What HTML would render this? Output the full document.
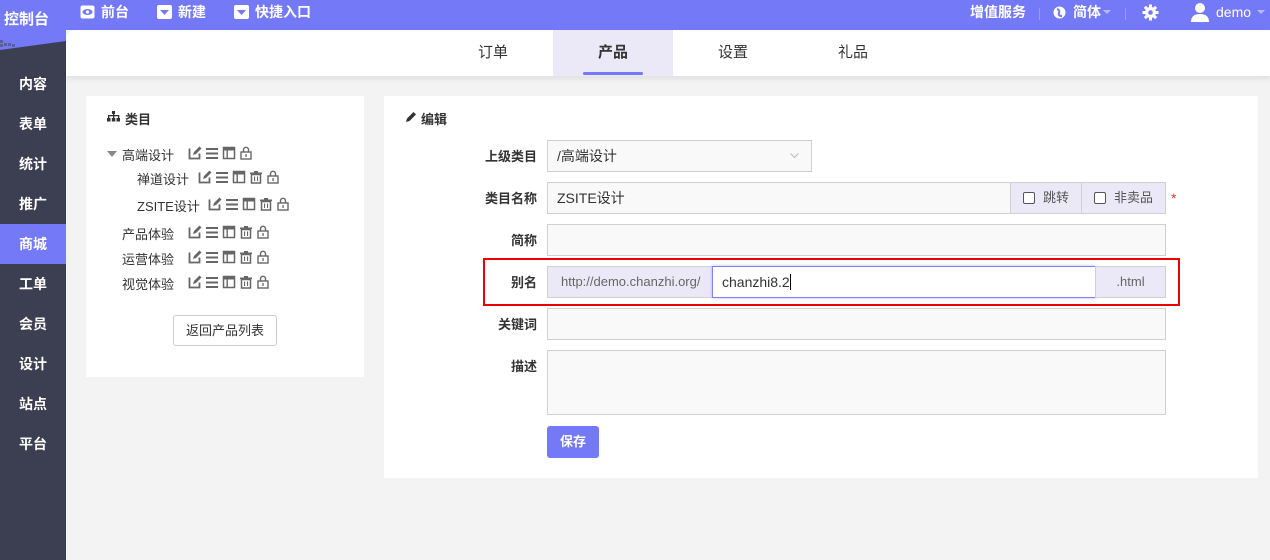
<!DOCTYPE html>
<html><head><meta charset="utf-8">
<style>
*{box-sizing:border-box;margin:0;padding:0}
body{width:1270px;height:560px;overflow:hidden;background:#f3f3f3;font-family:"Liberation Sans","Noto Sans CJK SC",sans-serif;font-size:13px;color:#333;position:relative}
.top{position:absolute;left:0;top:0;width:1270px;height:30px;background:#7479f8}
.top .t{position:absolute;top:0;line-height:24px;color:#fff;font-size:14px;font-weight:bold}
.side{position:absolute;left:0;top:30px;width:66px;height:530px;background:#3c3e51}
.side .slant{position:absolute;left:0;top:0;width:66px;height:20px;background:#7479f8;clip-path:polygon(0 0,100% 0,100% 55%,0 100%)}
.side a{position:absolute;left:0;width:66px;height:40px;line-height:40px;text-align:center;color:#fff;font-size:14px;font-weight:bold}
.side a.on{background:#7479f8}
.tabs{position:absolute;left:66px;top:30px;width:1204px;height:46px;background:#fff;border-top-left-radius:10px;box-shadow:0 3px 6px rgba(0,0,0,.08)}
.tab{position:absolute;top:0;width:120px;height:46px;line-height:46px;text-align:center;font-size:15px;color:#333}
.tab.on{background:#ebe9f7;font-weight:bold}
.tab.on:after{content:"";position:absolute;left:30px;bottom:1px;width:60px;height:3px;border-radius:2px;background:#7479f8}
.panel{position:absolute;background:#fff}
.tree div{position:absolute;font-size:13px;color:#333;white-space:nowrap}
.lbl{position:absolute;width:90px;text-align:right;font-weight:bold;font-size:13px;color:#333}
.inp{position:absolute;left:547px;width:619px;height:32px;background:#f9f9f9;border:1px solid #d0d0d0;font-size:14px;line-height:30px;padding-left:9px}
.addon{position:absolute;background:#ebe9f7;border:1px solid #d0d0d0;height:32px;line-height:30px;font-size:13px;color:#555}
.cb{display:inline-block;width:12px;height:12px;border:1px solid #555;border-radius:2px;vertical-align:-2px;margin-right:8px;background:#fff}
</style></head><body>
<div class="top">
  <div class="t" style="left:4px;top:5px;line-height:30px;font-size:15px">控制台</div>
  <svg style="position:absolute;left:80px;top:5px" width="15" height="14"><rect x="0.5" y="0.5" width="14" height="13" rx="2" fill="#fff"/><ellipse cx="7.5" cy="7" rx="5" ry="3" fill="#7479f8"/><circle cx="7.5" cy="7" r="1.6" fill="#fff"/></svg>
  <div class="t" style="left:101px">前台</div>
  <svg style="position:absolute;left:157px;top:5px" width="15" height="14"><rect width="15" height="14" rx="2" fill="#fff"/><path d="M3 5h9l-4.5 5z" fill="#7479f8"/></svg>
  <div class="t" style="left:178px">新建</div>
  <svg style="position:absolute;left:234px;top:5px" width="15" height="14"><rect width="15" height="14" rx="2" fill="#fff"/><path d="M3 5h9l-4.5 5z" fill="#7479f8"/></svg>
  <div class="t" style="left:255px">快捷入口</div>
  <div class="t" style="left:970px">增值服务</div>
  <div style="position:absolute;left:1039px;top:8px;width:1px;height:12px;background:#9a9df8"></div>
  <svg style="position:absolute;left:1053px;top:6px" width="13" height="13"><circle cx="6.5" cy="6.5" r="6" fill="#fff"/><path d="M4 3q3 1 2 4t3 3" stroke="#7479f8" stroke-width="2" fill="none"/></svg>
  <div class="t" style="left:1073px">简体</div>
  <svg style="position:absolute;left:1103px;top:10px" width="8" height="5"><path d="M0 0h8l-4 4z" fill="#b7b9fb"/></svg>
  <div style="position:absolute;left:1125px;top:8px;width:1px;height:12px;background:#9a9df8"></div>
  <svg style="position:absolute;left:1142px;top:4px" width="17" height="17" viewBox="0 0 17 17"><g fill="#fff"><circle cx="8.5" cy="8.5" r="5.5"/><rect x="7" y="0.5" width="3" height="16"/><rect x="0.5" y="7" width="16" height="3"/><rect x="7" y="0.5" width="3" height="16" transform="rotate(45 8.5 8.5)"/><rect x="7" y="0.5" width="3" height="16" transform="rotate(-45 8.5 8.5)"/></g><circle cx="8.5" cy="8.5" r="2.3" fill="#7479f8"/></svg>
  <svg style="position:absolute;left:1190px;top:2px" width="20" height="20"><circle cx="10" cy="6" r="5" fill="#fff"/><path d="M1 20q0-8 9-8t9 8z" fill="#fff"/></svg>
  <div class="t" style="left:1216px;font-weight:normal">demo</div>
  <svg style="position:absolute;left:1257px;top:10px" width="8" height="5"><path d="M0 0h8l-4 4z" fill="#b7b9fb"/></svg>
</div>
<div class="side">
  <div class="slant"></div>
  <svg style="position:absolute;left:0;top:10px" width="16" height="8"><g fill="#5a5f9c"><rect x="0" y="0" width="3" height="3"/><rect x="4" y="3" width="3" height="3"/><rect x="8" y="3" width="3" height="3"/><rect x="0" y="4" width="3" height="3"/><rect x="12" y="4" width="3" height="3"/></g></svg>
  <a style="top:34px">内容</a><a style="top:74px">表单</a><a style="top:114px">统计</a><a style="top:154px">推广</a><a class="on" style="top:194px">商城</a><a style="top:234px">工单</a><a style="top:274px">会员</a><a style="top:314px">设计</a><a style="top:354px">站点</a><a style="top:394px">平台</a>
</div>
<div class="tabs">
  <div class="tab" style="left:367px">订单</div>
  <div class="tab on" style="left:487px">产品</div>
  <div class="tab" style="left:607px">设置</div>
  <div class="tab" style="left:727px">礼品</div>
</div>

<div class="panel" style="left:86px;top:96px;width:278px;height:281px"></div>
<svg style="position:absolute;left:107px;top:111px" width="13" height="11"><g fill="#333"><rect x="5" y="0" width="3" height="3"/><rect x="1" y="4" width="11" height="1.3"/><rect x="1" y="4" width="1.3" height="3"/><rect x="6" y="3" width="1.3" height="4"/><rect x="11" y="4" width="1.3" height="3"/><rect x="0" y="7" width="3.5" height="3.5"/><rect x="4.8" y="7" width="3.5" height="3.5"/><rect x="9.5" y="7" width="3.5" height="3.5"/></g></svg>
<div style="position:absolute;left:125px;top:109px;font-weight:bold;font-size:13px">类目</div>

<svg width="0" height="0" style="position:absolute"><defs>
<g id="e"><path d="M1.5 2.5v10h10v-5" stroke="#666" stroke-width="1.8" fill="none"/><path d="M5 9l1-3 5.5-5.5 2 2-5.5 5.5z" fill="#666"/></g>
<g id="l"><rect x="1" y="2" width="12" height="2" fill="#666"/><rect x="1" y="6.5" width="12" height="2" fill="#666"/><rect x="1" y="11" width="12" height="2" fill="#666"/></g>
<g id="w"><rect x="1.5" y="1.5" width="11" height="11" stroke="#666" stroke-width="1.5" fill="none"/><rect x="1.5" y="1.5" width="11" height="3" fill="#666"/><rect x="4.5" y="4" width="1.4" height="8.5" fill="#666"/></g>
<g id="t"><rect x="2.5" y="4.5" width="9" height="8.5" stroke="#666" stroke-width="1.5" fill="none"/><rect x="1" y="2.5" width="12" height="1.6" fill="#666"/><rect x="5" y="1" width="4" height="1.6" fill="#666"/><rect x="5" y="6.5" width="1.1" height="4.5" fill="#666"/><rect x="8" y="6.5" width="1.1" height="4.5" fill="#666"/></g>
<g id="k"><rect x="2" y="6" width="10" height="7" stroke="#666" stroke-width="1.4" fill="none"/><path d="M4.5 6v-2.2a2.5 2.5 0 0 1 5 0v2.2" stroke="#666" stroke-width="1.4" fill="none"/><rect x="6.4" y="8" width="1.3" height="3" fill="#666"/></g>
</defs></svg>

<div class="tree">
 <svg style="position:absolute;left:107px;top:151px" width="10" height="6"><path d="M0 0h10l-5 6z" fill="#888"/></svg>
 <div style="left:122px;top:145px">高端设计</div>
 <svg style="position:absolute;left:188px;top:146px" width="70" height="14"><use href="#e"/><use href="#l" x="17"/><use href="#w" x="34"/><use href="#k" x="51"/></svg>
 <div style="left:137px;top:169px">禅道设计</div>
 <svg style="position:absolute;left:198px;top:170px" width="90" height="14"><use href="#e"/><use href="#l" x="17"/><use href="#w" x="34"/><use href="#t" x="51"/><use href="#k" x="68"/></svg>
 <div style="left:137px;top:196px">ZSITE设计</div>
 <svg style="position:absolute;left:208px;top:197px" width="90" height="14"><use href="#e"/><use href="#l" x="17"/><use href="#w" x="34"/><use href="#t" x="51"/><use href="#k" x="68"/></svg>
 <div style="left:122px;top:224px">产品体验</div>
 <svg style="position:absolute;left:188px;top:225px" width="90" height="14"><use href="#e"/><use href="#l" x="17"/><use href="#w" x="34"/><use href="#t" x="51"/><use href="#k" x="68"/></svg>
 <div style="left:122px;top:249px">运营体验</div>
 <svg style="position:absolute;left:188px;top:250px" width="90" height="14"><use href="#e"/><use href="#l" x="17"/><use href="#w" x="34"/><use href="#t" x="51"/><use href="#k" x="68"/></svg>
 <div style="left:122px;top:274px">视觉体验</div>
 <svg style="position:absolute;left:188px;top:275px" width="90" height="14"><use href="#e"/><use href="#l" x="17"/><use href="#w" x="34"/><use href="#t" x="51"/><use href="#k" x="68"/></svg>
</div>
<div style="position:absolute;left:173px;top:315px;width:104px;height:31px;border:1px solid #ccc;border-radius:3px;background:#fff;text-align:center;line-height:29px;font-size:13px">返回产品列表</div>

<div class="panel" style="left:384px;top:96px;width:874px;height:382px"></div>
<svg style="position:absolute;left:405px;top:111px" width="12" height="12"><path d="M1 11l1-3.5 6.5-6.5 2.5 2.5-6.5 6.5z" fill="#333"/></svg>
<div style="position:absolute;left:421px;top:109px;font-weight:bold">编辑</div>

<div class="lbl" style="left:447px;top:146px">上级类目</div>
<div class="inp" style="width:265px;height:32px;top:140px">/高端设计<svg style="position:absolute;right:12px;top:12px" width="9" height="6"><path d="M0.5 0.5l4 4 4-4" stroke="#bbb" fill="none"/></svg></div>

<div class="lbl" style="left:447px;top:188px">类目名称</div>
<div class="inp" style="top:182px;width:464px">ZSITE设计</div>
<div class="addon" style="left:1010px;top:182px;width:72px;padding-left:12px"><span class="cb"></span>跳转</div>
<div class="addon" style="left:1081px;top:182px;width:85px;padding-left:12px"><span class="cb"></span>非卖品</div>
<div style="position:absolute;left:1171px;top:190px;color:#e33;font-size:14px">*</div>

<div class="lbl" style="left:447px;top:230px">简称</div>
<div class="inp" style="top:224px"></div>

<div style="position:absolute;left:483px;top:258px;width:697px;height:48px;border:2px solid #e00"></div>
<div class="lbl" style="left:447px;top:272px">别名</div>
<div class="addon" style="left:547px;top:266px;width:166px;padding-left:13px;color:#666">http://demo.chanzhi.org/</div>
<div style="position:absolute;left:712px;top:266px;width:384px;height:32px;background:#fff;border:1px solid #7d82f5;box-shadow:0 0 3px rgba(116,121,248,.5);line-height:30px;padding-left:9px;font-size:14px">chanzhi8.2<span style="display:inline-block;width:1px;height:16px;background:#000;vertical-align:-3px"></span></div>
<div class="addon" style="left:1095px;top:266px;width:71px;text-align:center;color:#666">.html</div>

<div class="lbl" style="left:447px;top:314px">关键词</div>
<div class="inp" style="top:308px"></div>

<div class="lbl" style="left:447px;top:356px">描述</div>
<div class="inp" style="top:350px;height:65px"></div>

<div style="position:absolute;left:547px;top:426px;width:52px;height:32px;background:#7479f8;border-radius:3px;color:#fff;font-weight:bold;text-align:center;line-height:32px">保存</div>
</body></html>
